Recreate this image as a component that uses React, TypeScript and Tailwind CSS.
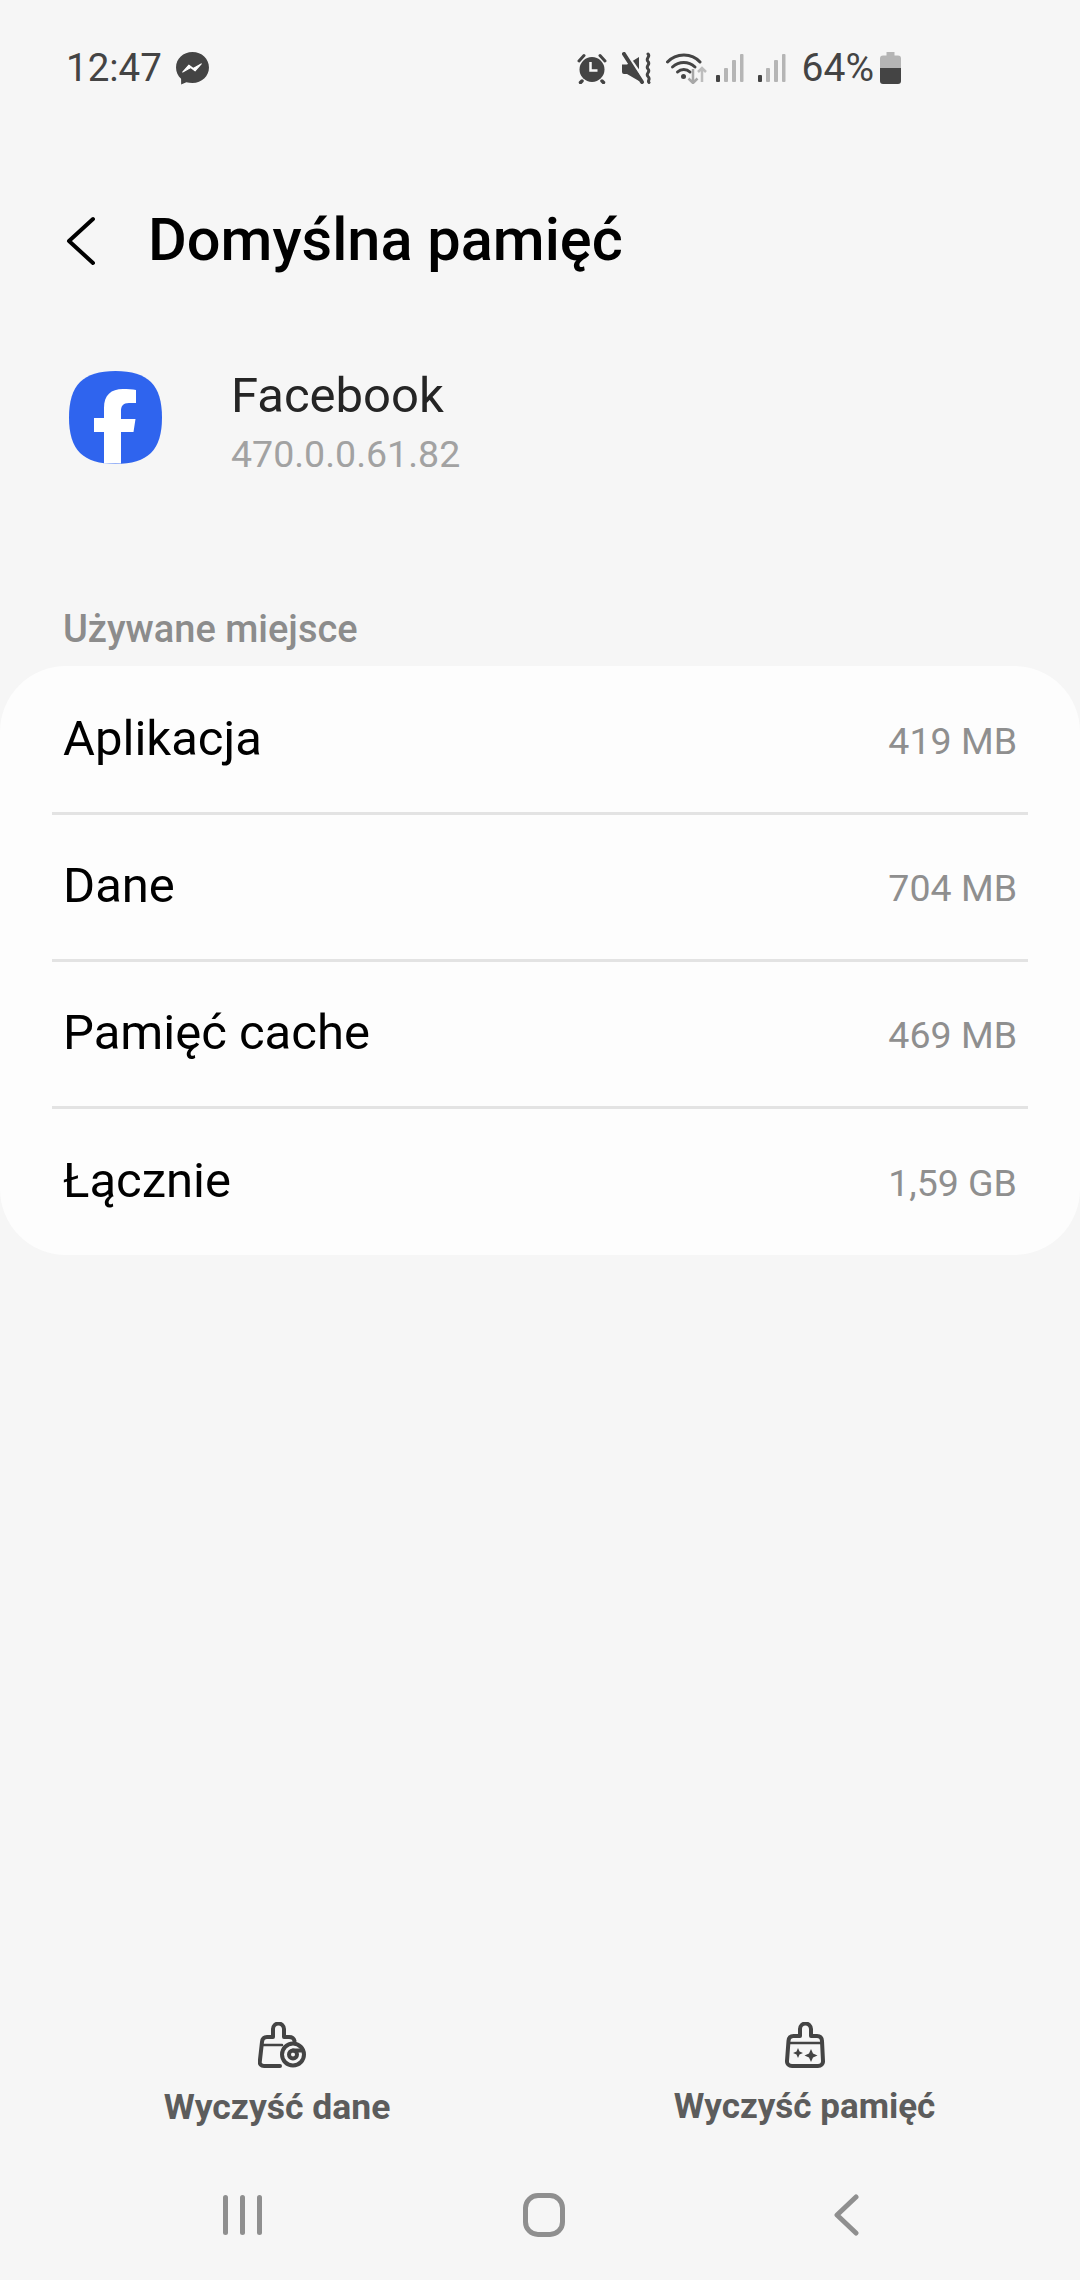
const rows = [
  { label: "Aplikacja", value: "419 MB" },
  { label: "Dane", value: "704 MB" },
  { label: "Pamięć cache", value: "469 MB" },
  { label: "Łącznie", value: "1,59 GB" },
];

function MessengerIcon() {
  return (
    <svg width="35" height="35" viewBox="0 0 34 34">
      <path d="M17 1C8 1 1 7.500 1 16c0 4.400 1.800 8.300 4.900 11l.1 5.500 5-2.200c1.900.5 3.900.8 6 .8 9 0 16-6.500 16-15S26 1 17 1z" fill="#444" />
      <path d="M7.500 20.500l6-6.800 4.200 3.300 7.800-4.500-6 6.800-4.200-3.300z" fill="#fff" stroke="#fff" strokeWidth="1" strokeLinejoin="round" />
    </svg>
  );
}

function AlarmIcon() {
  return (
    <svg width="30" height="32" viewBox="0 0 30 32" fill="#444">
      <circle cx="15" cy="17.500" r="12.500" />
      <path d="M2 9l5-5.500M28 9l-5-5.500" stroke="#444" strokeWidth="3" strokeLinecap="round" />
      <path d="M5 29l-1.500 1.500M25 29l1.500 1.500" stroke="#444" strokeWidth="3.500" strokeLinecap="round" />
      <path d="M13.500 10v8.500h7" fill="none" stroke="#f6f6f6" strokeWidth="2.500" />
    </svg>
  );
}

function MuteIcon() {
  return (
    <svg width="30" height="32" viewBox="0 0 30 32">
      <path d="M0 12.500h5L17 5v24L5 22H2a2 2 0 0 1-2-2z" fill="#444" />
      <path d="M3 0l19 27" stroke="#f6f6f6" strokeWidth="3" />
      <path d="M2 2l18 28" stroke="#444" strokeWidth="4" strokeLinecap="round" />
      <path d="M26 2c3 2.500-3 4.500 0 7.500s-3 4.500 0 7.500-3 4.500 0 7.500-1 4 1 6" fill="none" stroke="#444" strokeWidth="3" strokeLinecap="round" />
    </svg>
  );
}

function WifiIcon() {
  return (
    <svg width="41" height="32" viewBox="0 0 41 32" fill="none">
      <path d="M1.500 10C10 .500 26 .500 34 10" stroke="#444" strokeWidth="3" strokeLinecap="round" />
      <path d="M6.500 15c6.500-6 16-6 22.500 0" stroke="#444" strokeWidth="3" strokeLinecap="round" />
      <path d="M11.500 20c3.500-3.500 9-3.500 12.500 0" stroke="#444" strokeWidth="3" strokeLinecap="round" />
      <circle cx="17.500" cy="24.500" r="2.500" fill="#444" />
      <path d="M27 17v14M22.500 26.500L27 31l4.500-4.500" stroke="#a8a8a8" strokeWidth="2.500" />
      <path d="M36 30V16M32 20l4-4 4 4" stroke="#bdbdbd" strokeWidth="2.500" />
    </svg>
  );
}

function SignalIcon() {
  return (
    <svg width="28" height="30" viewBox="0 0 28 30">
      <rect x="0" y="22" width="4" height="7" rx="1" fill="#444" />
      <rect x="8" y="15" width="4" height="14" rx="1" fill="#b5b5b5" />
      <rect x="16" y="7" width="4" height="22" rx="1" fill="#b5b5b5" />
      <rect x="24" y="1" width="3.500" height="28" rx="1" fill="#b5b5b5" />
    </svg>
  );
}

function BatteryIcon() {
  return (
    <svg width="21" height="32" viewBox="0 0 21 32">
      <path d="M6.500 0h8v3.500H18a3 3 0 0 1 3 3V16H0V6.500a3 3 0 0 1 3-3h3.500z" fill="#b5b5b5" />
      <path d="M0 16h21v13a3 3 0 0 1-3 3H3a3 3 0 0 1-3-3z" fill="#444" />
    </svg>
  );
}

function BackIcon() {
  return (
    <svg width="30" height="50" viewBox="0 0 30 50" fill="none" stroke="#000" strokeWidth="4" strokeLinecap="round" strokeLinejoin="round">
      <path d="M27 3L3 25l24 22" />
    </svg>
  );
}

function FacebookIcon() {
  return (
    <svg width="93" height="93" viewBox="0 0 93 93">
      <path d="M46.500 0C79 0 93 14 93 46.500S79 93 46.500 93 0 79 0 46.500 14 0 46.500 0z" fill="#2f64ee" />
      <path d="M35 92.500V61H25V47h10V37c0-13 7-19 19-19 4 0 10 .4 13 1v13h-7c-6 0-8 3-8 8v8h14.500L64.500 61H52v31.500z" fill="#fff" />
    </svg>
  );
}

function BrushDataIcon() {
  return (
    <svg width="48" height="46" viewBox="0 0 48 46" fill="none" stroke="#444" strokeWidth="4" strokeLinejoin="round" strokeLinecap="round">
      <path d="M22 44H6c-3 0-4.500-2-4.200-4.500L4 20c.3-3 2-5 5-5h6V7a5.500 5.500 0 0 1 11 0v8h5c3 0 5 1.500 5.500 4" />
      <path d="M4 23h20" strokeWidth="2.500" />
      <circle cx="35" cy="32.500" r="11" />
      <circle cx="35" cy="32.500" r="4" />
      <path d="M35 28.500h8" />
    </svg>
  );
}

function BrushCacheIcon() {
  return (
    <svg width="40" height="46" viewBox="0 0 40 46" fill="none" stroke="#444" strokeWidth="4" strokeLinejoin="round">
      <path d="M2 39l1.500-20c.2-3 2-5 5-5H15V7a5.500 5.500 0 0 1 11 0v7h6c3 0 4.800 2 5 5l1 20c.2 3-2 5-5 5H7c-3 0-5.200-2-5-5z" />
      <path d="M3 21h34" strokeWidth="2.500" />
      <path d="M13 26l1.500 3.500L18 31l-3.500 1.500L13 36l-1.500-3.500L8 31l3.500-1.500zM26 27l2 4.500 4.500 2-4.500 2-2 4.500-2-4.500-4.500-2 4.500-2z" fill="#444" stroke="none" />
    </svg>
  );
}

function NavBar() {
  return (
    <div className="h-[96px] grid grid-cols-[302px_302px_302px] items-center pl-[91px]">
      <div className="flex justify-center gap-[12px]">
        <div className="w-[5px] h-[40px] rounded-full bg-[#8f8f8f]" />
        <div className="w-[5px] h-[40px] rounded-full bg-[#8f8f8f]" />
        <div className="w-[5px] h-[40px] rounded-full bg-[#8f8f8f]" />
      </div>
      <div className="flex justify-center">
        <div className="w-[42px] h-[44px] rounded-[15px] border-[5px] border-[#8f8f8f]" />
      </div>
      <div className="flex justify-center">
        <svg width="26" height="42" viewBox="0 0 26 42" fill="none" stroke="#8f8f8f" strokeWidth="5" strokeLinecap="round" strokeLinejoin="round">
          <path d="M23 3L4 21l19 18" />
        </svg>
      </div>
    </div>
  );
}

export default function App() {
  return (
    <div className="w-[1080px] h-[2280px] bg-[#f6f6f6] flex flex-col font-['Roboto',sans-serif] overflow-hidden">
      {/* status bar */}
      <div className="h-[134px] pt-[2px] flex items-center justify-between pl-[66px] pr-[179px] text-[#444]">
        <div className="flex items-center gap-[13px]">
          <span className="text-[38.500px] leading-none">12:47</span>
          <MessengerIcon />
        </div>
        <div className="flex items-center">
          <AlarmIcon />
          <div className="ml-[15px]"><MuteIcon /></div>
          <div className="ml-[14px]"><WifiIcon /></div>
          <div className="ml-[9px]"><SignalIcon /></div>
          <div className="ml-[14px]"><SignalIcon /></div>
          <span className="ml-[16px] text-[39px] leading-none">64%</span>
          <div className="ml-[6px]"><BatteryIcon /></div>
        </div>
      </div>

      {/* header */}
      <div className="h-[110px] mt-[52px] flex items-center pl-[66px]">
        <BackIcon />
        <h1 className="ml-[52px] text-[59.500px] font-medium text-black leading-none">Domyślna pamięć</h1>
      </div>

      {/* app info */}
      <div className="flex items-start pl-[69px] mt-[71px]">
        <div className="mt-[4px]"><FacebookIcon /></div>
        <div className="ml-[69px]">
          <div className="text-[49px] leading-[58px] text-[#252525]">Facebook</div>
          <div className="mt-[6px] text-[37.500px] leading-[46px] text-[#a2a2a2]">470.0.0.61.82</div>
        </div>
      </div>

      <div className="mt-[130px] pl-[63px] text-[38px] leading-[44px] font-medium text-[#8c8c8c]">Używane miejsce</div>

      {/* storage card */}
      <div className="mt-[15px] pt-[2px] bg-[#fdfdfd] rounded-[66px] px-[52px]">
        {rows.map((row, i) => (
          <div key={row.label} className={`flex items-center justify-between px-[11px] pb-[2px] ${i < rows.length - 1 ? "h-[147px] border-b-[3px] border-[#e3e3e3]" : "h-[146px]"}`}>
            <span className="text-[49px] text-black">{row.label}</span>
            <span className="pt-[4px] text-[37.500px] text-[#8f8f8f]">{row.value}</span>
          </div>
        ))}
      </div>

      {/* actions */}
      <div className="mt-auto grid grid-cols-2 px-[16px]">
        <div className="flex flex-col items-center pr-[2px]">
          <div className="ml-[10px]"><BrushDataIcon /></div>
          <span className="mt-[19px] text-[35.500px] leading-[40px] font-bold text-[#5c5c5c]">Wyczyść dane</span>
        </div>
        <div className="flex flex-col items-center pl-[5px]">
          <BrushCacheIcon />
          <span className="mt-[19px] text-[35px] leading-[40px] font-bold text-[#5c5c5c]">Wyczyść pamięć</span>
        </div>
      </div>
      <div className="mt-[40px] mb-[17px]">
        <NavBar />
      </div>
    </div>
  );
}
